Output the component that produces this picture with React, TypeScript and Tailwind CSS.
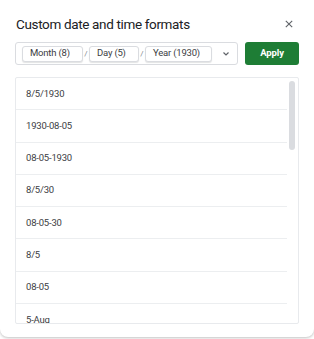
import React from 'react';

const FORMATS = ['8/5/1930', '1930-08-05', '08-05-1930', '8/5/30', '08-05-30', '8/5', '08-05', '5-Aug'];

const Chip: React.FC<{ label: string; width: string }> = ({ label, width }) => (
  <div
    className={`${width} h-[16px] flex items-center pl-[7px] border border-[#dadce0] rounded-[3px] shadow-[0_1px_1px_rgba(60,64,67,0.15)] text-[9.5px] tracking-[-0.2px] text-[#3c4043] bg-white`}
  >
    {label}
  </div>
);

const App: React.FC = () => {
  return (
    <div className="w-[314px] h-[339px] bg-white font-['Roboto',sans-serif] overflow-hidden">
      <div className="h-[337px] bg-white rounded-b-[8px] shadow-[0_1px_3px_rgba(0,0,0,0.25)] px-[15px] pt-[13px]">
        {/* Header */}
        <div className="flex items-center justify-between h-[22px]">
          <h1 className="text-[13.5px] text-[#202124] tracking-[-0.35px] pl-[1px]">
            Custom date and time formats
          </h1>
          <svg width="8" height="8" viewBox="0 0 8 8" className="mr-[6px]">
            <path d="M0.8 0.8 L7.2 7.2 M7.2 0.8 L0.8 7.2" stroke="#5f6368" strokeWidth="1.1" />
          </svg>
        </div>

        {/* Format input + Apply */}
        <div className="flex items-center gap-[7px] mt-[7px]">
          <div className="w-[223px] h-[23px] border border-[#dadce0] rounded-[3px] flex items-center pl-[6px] pr-[7px]">
            <Chip label="Month (8)" width="w-[61px]" />
            <span className="w-[6px] text-center text-[8px] text-[#80868b]">/</span>
            <Chip label="Day (5)" width="w-[50px]" />
            <span className="w-[6px] text-center text-[8px] text-[#80868b]">/</span>
            <Chip label="Year (1930)" width="w-[67px]" />
            <div className="flex-1" />
            <svg width="8" height="6" viewBox="0 0 8 6">
              <path d="M1.5 1.5 L4 4 L6.5 1.5" stroke="#5f6368" strokeWidth="1.2" fill="none" />
            </svg>
          </div>
          <button className="w-[54px] h-[23px] rounded-[3px] bg-[#1e7d35] text-white text-[9.5px] tracking-[-0.1px] font-bold">
            Apply
          </button>
        </div>

        {/* Format list */}
        <div className="mt-[12px] w-[284px] h-[247px] border border-[#e8eaed] rounded-[2px] flex overflow-hidden">
          <div className="flex-1">
            {FORMATS.map((f, i) => (
              <div
                key={f}
                className={`h-[32.3px] flex items-center pl-[10px] text-[9.5px] tracking-[-0.2px] text-[#3c4043] ${
                  i < FORMATS.length - 1 ? 'border-b border-[#eceef0]' : ''
                }`}
              >
                {f}
              </div>
            ))}
          </div>
          <div className="w-[11px] pt-[3px] pl-[2px]">
            <div className="w-[6px] h-[69px] rounded-[3px] bg-[#dadce0]" />
          </div>
        </div>
      </div>
    </div>
  );
};

export default App;
